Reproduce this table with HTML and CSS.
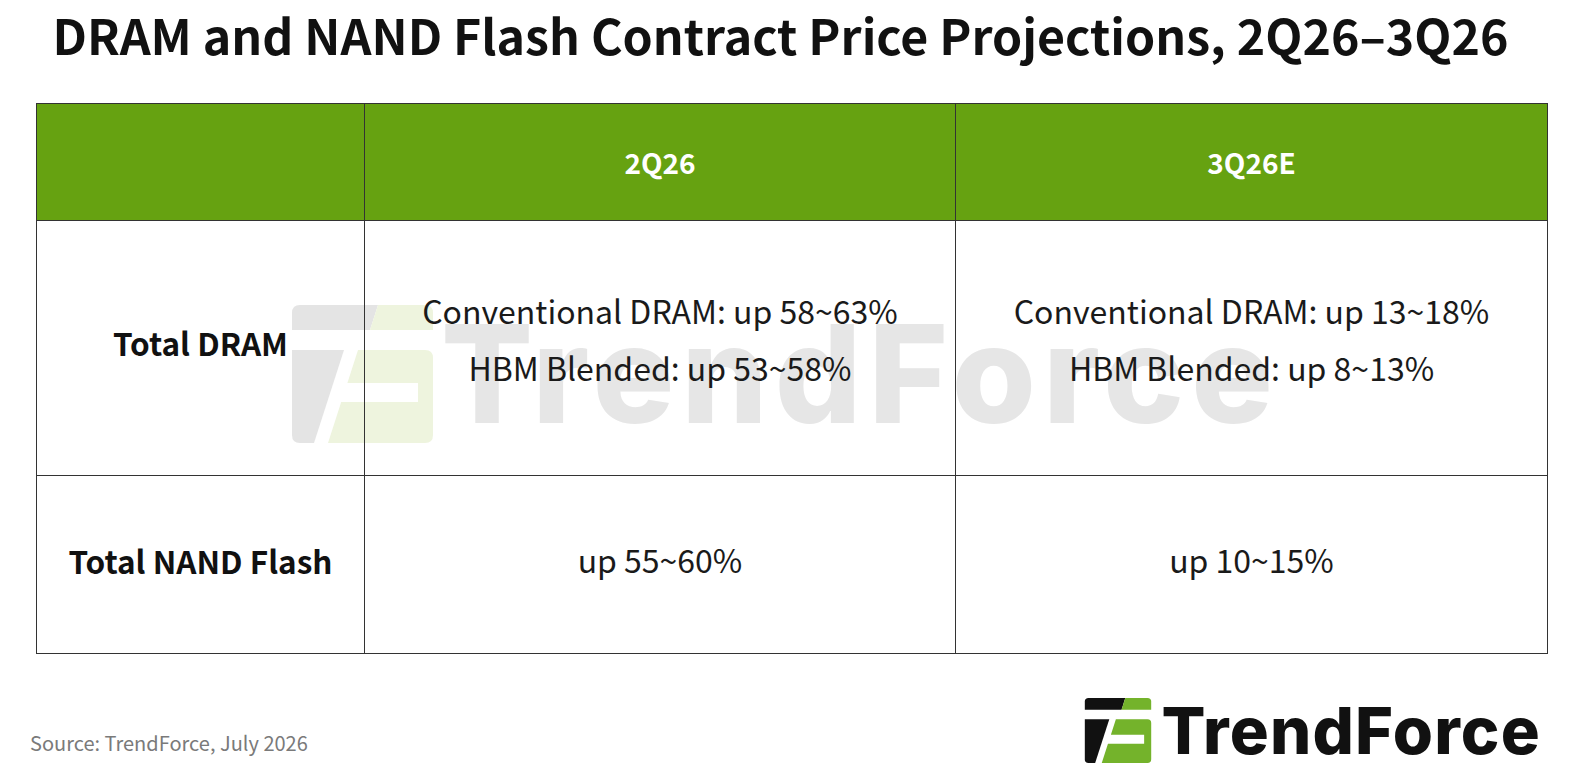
FILE: index.html
```html
<!DOCTYPE html>
<html lang="en">
<head>
<meta charset="utf-8">
<title>DRAM and NAND Flash Contract Price Projections</title>
<link rel="stylesheet" href="styles.css">
</head>
<body>
<div class="page">
  <h1 class="title">DRAM and NAND Flash Contract Price Projections, 2Q26–3Q26</h1>

  <table class="grid">
    <colgroup>
      <col class="c1"><col class="c2"><col class="c3">
    </colgroup>
    <thead>
      <tr class="head">
        <th></th>
        <th>2Q26</th>
        <th>3Q26E</th>
      </tr>
    </thead>
    <tbody>
      <tr class="row-dram">
        <th class="label">Total DRAM</th>
        <td><p>Conventional DRAM: up 58~63%</p><p>HBM Blended: up 53~58%</p></td>
        <td><p>Conventional DRAM: up 13~18%</p><p>HBM Blended: up 8~13%</p></td>
      </tr>
      <tr class="row-nand">
        <th class="label">Total NAND Flash</th>
        <td><p>up 55~60%</p></td>
        <td><p>up 10~15%</p></td>
      </tr>
    </tbody>
  </table>

  <div class="footer">
    <div class="source">Source: TrendForce, July 2026</div>
    <div class="logo">
      <svg class="logo-icon" viewBox="0 0 141 138" aria-hidden="true">
        <path class="k" d="M8 0 H86 L78 25 H0 V8 Q0 0 8 0 Z"/>
        <path class="g" d="M86 0 H133 Q141 0 141 8 V25 H78 Z"/>
        <path class="k" d="M0 45 H52 L22 138 H8 Q0 138 0 130 Z"/>
        <path class="g" d="M66 45 H133 Q141 45 141 53 V130 Q141 138 133 138 H36 L49.2 97 H126 V78 H55.4 Z"/>
      </svg>
      <span class="logo-text">TrendForce</span>
    </div>
  </div>

  <div class="watermark" aria-hidden="true">
    <svg class="wm-icon" viewBox="0 0 141 138">
      <path class="k" d="M8 0 H86 L78 25 H0 V8 Q0 0 8 0 Z"/>
      <path class="g" d="M86 0 H133 Q141 0 141 8 V25 H78 Z"/>
      <path class="k" d="M0 45 H52 L22 138 H8 Q0 138 0 130 Z"/>
      <path class="g" d="M66 45 H133 Q141 45 141 53 V130 Q141 138 133 138 H36 L49.2 97 H126 V78 H55.4 Z"/>
    </svg>
    <span class="wm-text">TrendForce</span>
  </div>
</div>
</body>
</html>
```

FILE: styles.css
```css
html, body {
  margin: 0;
  padding: 0;
  background: #ffffff;
}

body {
  font-family: "Noto Sans CJK SC", "Noto Sans", sans-serif;
  color: #161616;
}

.page {
  position: relative;
  width: 1571px;
  height: 768px;
  overflow: hidden;
}

.title {
  margin: 0;
  padding-right: 10px;
  height: 68px;
  line-height: 68px;
  font-size: 48.3px;
  font-weight: 700;
  text-align: center;
  color: #111;
}

.grid {
  position: relative;
  z-index: 2;
  margin: 35px 0 0 36px;
  width: 1511px;
  border-collapse: collapse;
  table-layout: fixed;
}

.c1 { width: 328px; }
.c2 { width: 591px; }
.c3 { width: 592px; }

.grid th, .grid td {
  border: 1.5px solid #333;
  text-align: center;
  vertical-align: middle;
  padding: 0;
}

.head th {
  background: #66a211;
  color: #fff;
  font-size: 28px;
  font-weight: 700;
  height: 116px;
}

.label {
  font-size: 31.5px;
  font-weight: 700;
  color: #111;
}

.grid td {
  font-size: 32px;
  font-weight: 400;
  color: #1a1a1a;
}

.grid p {
  margin: 0;
  line-height: 57px;
}

.row-dram td {
  height: 236px;
  padding-bottom: 18px;
}

.row-dram th {
  height: 242px;
  padding-bottom: 12px;
}

.row-nand th, .row-nand td {
  height: 167px;
  padding-bottom: 10px;
}

.footer {
  display: flex;
  justify-content: space-between;
  align-items: flex-end;
  padding: 44px 30px 0 30px;
}

.source {
  font-size: 20px;
  color: #7a7a7a;
  padding-bottom: 6px;
}

.logo {
  display: flex;
  align-items: center;
  gap: 9px;
}

.logo-icon {
  width: 70px;
  height: 65px;
}

.logo-icon .k { fill: #111; }
.logo-icon .g { fill: #74b32b; }

.logo-text {
  font-family: "Inter", "Liberation Sans", sans-serif;
  font-weight: 800;
  font-size: 65px;
  line-height: 65px;
  color: #111;
  letter-spacing: 1.2px;
}

.watermark {
  position: absolute;
  left: 292px;
  top: 305px;
  z-index: 1;
  display: flex;
  align-items: center;
  gap: 8px;
  pointer-events: none;
}

.wm-icon {
  width: 141px;
  height: 138px;
}

.wm-icon .k { fill: #e4e4e4; }
.wm-icon .g { fill: #eef4de; }

.wm-text {
  font-family: "Inter", "Liberation Sans", sans-serif;
  font-weight: 800;
  font-size: 136px;
  line-height: 138px;
  color: #e6e6e6;
  letter-spacing: 7px;
}
```
